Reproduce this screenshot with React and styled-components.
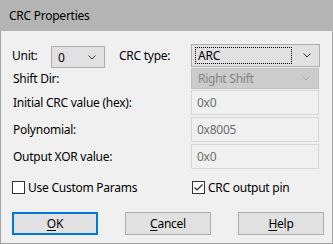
import React from "react";
import styled, { createGlobalStyle } from "styled-components";

const Global = createGlobalStyle`
  html, body { margin: 0; padding: 0; background: #f0f0f0; }
  body { font-family: "Noto Sans", "Segoe UI", sans-serif; font-size: 12px; letter-spacing: -0.25px; color: #000; }
`;

const Window = styled.div`
  width: 333px;
  height: 244px;
  box-sizing: border-box;
  border: 1px solid #a3a3a3;
  border-top: none;
  background: #f0f0f0;
  display: flex;
  flex-direction: column;
`;

const TitleBar = styled.div`
  height: 31px;
  margin: 0 -1px;
  background: #b4b4b4;
  display: flex;
  align-items: center;
  padding-left: 9px;
  font-size: 12px;
  color: #000;
  flex-shrink: 0;
`;

const Body = styled.div`
  display: flex;
  flex-direction: column;
  padding: 13px 0 0 10px;
`;

const Row = styled.div`
  display: flex;
  align-items: center;
  height: ${(p) => p.$h}px;
  margin-top: ${(p) => p.$mt || 0}px;
`;

const Label = styled.div`
  width: ${(p) => p.$w}px;
  padding-left: ${(p) => p.$pl || 0}px;
  margin-left: ${(p) => p.$ml || 0}px;
  box-sizing: border-box;
  white-space: nowrap;
  flex-shrink: 0;
`;

const Select = styled.div`
  box-sizing: border-box;
  width: ${(p) => p.$w}px;
  height: ${(p) => p.$h}px;
  margin-top: ${(p) => p.$mt || 0}px;
  align-self: flex-start;
  background: ${(p) => (p.$disabled ? "#cccccc" : "#e1e1e1")};
  border: 1px solid ${(p) => (p.$disabled ? "#bfbfbf" : "#adadad")};
  color: ${(p) => (p.$disabled ? "#838383" : "#000")};
  display: flex;
  align-items: center;
  padding: 0 8px 0 3px;
  flex-shrink: 0;
`;

const SelectText = styled.div`
  flex: 1;
  display: flex;
  align-items: center;
  height: 17px;
  padding-left: 2px;
  margin-right: 11px;
  box-sizing: border-box;
  border: 1px ${(p) => (p.$focus ? "dotted #000" : "solid transparent")};
`;

const TextBox = styled.div`
  box-sizing: border-box;
  width: 128px;
  height: 25px;
  background: #f0f0f0;
  border: 1px solid #d6d6d6;
  color: #6d6d6d;
  display: flex;
  align-items: center;
  padding-left: 5px;
  flex-shrink: 0;
`;

const CheckRow = styled.div`
  display: flex;
  margin-top: 11px;
  height: 14px;
  align-items: center;
`;

const CheckItem = styled.label`
  display: flex;
  align-items: center;
  gap: 3px;
  width: ${(p) => p.$w}px;
  padding-left: ${(p) => p.$pl || 0}px;
  white-space: nowrap;
`;

const Box = styled.span`
  width: 13px;
  height: 13px;
  box-sizing: border-box;
  border: 1px solid #333;
  background: #fff;
  display: flex;
  align-items: center;
  justify-content: center;
`;

const Buttons = styled.div`
  display: flex;
  gap: 27px;
  margin-top: 18px;
  padding-left: 1px;
`;

const Button = styled.div`
  box-sizing: border-box;
  width: 86px;
  height: 23px;
  background: #e1e1e1;
  border: ${(p) => (p.$default ? "2px solid #0078d7" : "1px solid #adadad")};
  display: flex;
  align-items: center;
  justify-content: center;
  u { text-decoration: underline; text-underline-offset: 2px; }
`;

const Chevron = ({ color = "#333" }) => (
  <svg width="8" height="5" viewBox="0 0 8 5">
    <polyline points="0.5,0.5 4,4 7.5,0.5" fill="none" stroke={color} strokeWidth="1" />
  </svg>
);

const Check = () => (
  <svg width="11" height="11" viewBox="0 0 11 11">
    <polyline points="1.5,5.5 4,8 9.5,2.5" fill="none" stroke="#222" strokeWidth="1.1" />
  </svg>
);

export default function App() {
  return (
    <>
      <Global />
      <Window>
        <TitleBar>CRC Properties</TitleBar>
        <Body>
          <Row $h={23}>
            <Label $w={40} $pl={1}>Unit:</Label>
            <Select $w={54} $h={22} $mt={2}>
              <SelectText>0</SelectText>
              <Chevron />
            </Select>
            <Label $w={72} $ml={14}>CRC type:</Label>
            <Select $w={129} $h={23}>
              <SelectText $focus>ARC</SelectText>
              <Chevron />
            </Select>
          </Row>
          <Row $h={21} $mt={1}>
            <Label $w={180} $pl={2}>Shift Dir:</Label>
            <Select $w={128} $h={21} $disabled>
              <SelectText>Right Shift</SelectText>
              <Chevron color="#aaa" />
            </Select>
          </Row>
          <Row $h={25} $mt={1}>
            <Label $w={180} $pl={2}>Initial CRC value (hex):</Label>
            <TextBox>0x0</TextBox>
          </Row>
          <Row $h={25} $mt={2}>
            <Label $w={180} $pl={2}>Polynomial:</Label>
            <TextBox>0x8005</TextBox>
          </Row>
          <Row $h={25} $mt={2}>
            <Label $w={180} $pl={2}>Output XOR value:</Label>
            <TextBox>0x0</TextBox>
          </Row>
          <CheckRow>
            <CheckItem $w={180} $pl={1}>
              <Box />
              Use Custom Params
            </CheckItem>
            <CheckItem>
              <Box>
                <Check />
              </Box>
              CRC output pin
            </CheckItem>
          </CheckRow>
          <Buttons>
            <Button $default>
              <span><u>O</u>K</span>
            </Button>
            <Button>
              <span><u>C</u>ancel</span>
            </Button>
            <Button>
              <span><u>H</u>elp</span>
            </Button>
          </Buttons>
        </Body>
      </Window>
    </>
  );
}
